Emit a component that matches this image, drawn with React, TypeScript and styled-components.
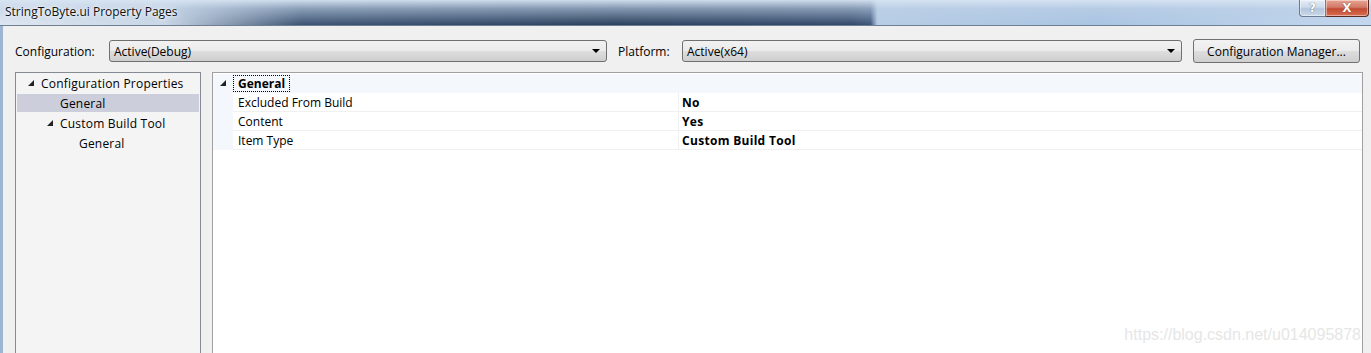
import React from 'react';
import styled, { createGlobalStyle } from 'styled-components';

type Property = {
  name: string;
  value: string;
}

type TreeNode = {
  label: string;
  depth: number;
  expanded?: boolean;
  selected?: boolean;
}

const properties: Array<Property> = [
  { name: 'Excluded From Build', value: 'No' },
  { name: 'Content', value: 'Yes' },
  { name: 'Item Type', value: 'Custom Build Tool' },
];

const treeNodes: Array<TreeNode> = [
  { label: 'Configuration Properties', depth: 0, expanded: true },
  { label: 'General', depth: 1, selected: true },
  { label: 'Custom Build Tool', depth: 1, expanded: true },
  { label: 'General', depth: 2 },
];

const GlobalStyle = createGlobalStyle`
  html, body {
    margin: 0;
    padding: 0;
    overflow: hidden;
  }
  body {
    font-family: "Open Sans", "Noto Sans", sans-serif;
    font-size: 12px;
    color: #000;
  }
`

const Window = styled.div`
  width: 1371px;
  height: 353px;
  display: flex;
  flex-direction: column;
  overflow: hidden;
  background: #a9c3df;
`

const TitleBar = styled.div`
  height: 25px;
  display: flex;
  align-items: flex-start;
  background:
    linear-gradient(180deg, rgba(215, 228, 242, 0.95) 0%, rgba(190, 208, 230, 0.6) 35%, rgba(40, 60, 90, 0) 100%),
    linear-gradient(90deg, #dfe7f0 0%, #c9d7e6 12%, #3c5372 22%, #2b405d 45%, #33496a 62%, #3d567a 63.5%, #b7cde5 64%, #a9c4e2 80%, #c3d8ee 100%);
  border-bottom: 1px solid #6e7f94;
`

const Title = styled.span`
  padding: 3px 0 0 5px;
  font-family: "Open Sans", "Noto Sans", sans-serif;
  font-size: 12px;
  color: #111;
  text-shadow: 0 0 6px #fff, 0 0 3px #fff;
`

const CaptionButtons = styled.div`
  margin-left: auto;
  margin-right: 2px;
  display: flex;
`

const CaptionButton = styled.div<{ $close?: boolean }>`
  width: ${p => (p.$close ? 43 : 27)}px;
  height: 17px;
  box-sizing: border-box;
  display: flex;
  align-items: center;
  justify-content: center;
  border: 1px solid ${p => (p.$close ? '#5a2a24' : '#6b7c90')};
  border-top: none;
  border-radius: ${p => (p.$close ? '0 0 4px 0' : '0 0 0 4px')};
  border-left: ${p => (p.$close ? 'none' : undefined)};
  background: ${p => p.$close
    ? 'linear-gradient(180deg, #e8a493 0%, #d27a68 45%, #c24a33 55%, #d86e52 100%)'
    : 'linear-gradient(180deg, #e6eef8 0%, #ccdaea 45%, #b3c6dc 55%, #c9d8ea 100%)'};
  box-shadow: inset 0 0 0 1px rgba(255, 255, 255, 0.45);
  color: #fff;
  font-family: "DejaVu Sans", sans-serif;
  font-weight: bold;
  font-size: 12px;
`

const Body = styled.div`
  flex: 1;
  display: flex;
  flex-direction: column;
  background: #f0f0f0;
  border-left: 3px solid #9db5d2;
  padding: 13px 8px 0 12px;
  min-height: 0;
`

const Toolbar = styled.div`
  display: flex;
  align-items: center;
  height: 24px;
`

const FieldLabel = styled.label<{ $width: number; $gap?: number }>`
  width: ${p => p.$width}px;
  margin-left: ${p => p.$gap ?? 0}px;
  font-size: 12px;
`

const Combo = styled.div<{ $width: number }>`
  width: ${p => p.$width}px;
  height: 22px;
  box-sizing: border-box;
  display: flex;
  align-items: center;
  padding: 0 4px;
  border: 1px solid #707070;
  border-radius: 3px;
  background: linear-gradient(180deg, #f2f2f2 0%, #ebebeb 48%, #dddddd 52%, #cfcfcf 100%);
`

const ComboText = styled.span`
  flex: 1;
`

const ComboArrow = styled.span`
  width: 0;
  height: 0;
  margin-right: 2px;
  border-left: 4px solid transparent;
  border-right: 4px solid transparent;
  border-top: 4px solid #000;
`

const Button = styled.button`
  margin-left: 11px;
  width: 167px;
  height: 24px;
  box-sizing: border-box;
  border: 1px solid #707070;
  border-radius: 3px;
  background: linear-gradient(180deg, #f2f2f2 0%, #ebebeb 48%, #dddddd 52%, #cfcfcf 100%);
  font-family: "Open Sans", "Noto Sans", sans-serif;
  font-size: 12px;
  color: #000;
  padding: 0;
`

const Panes = styled.div`
  flex: 1;
  display: flex;
  gap: 11px;
  margin-top: 9px;
  min-height: 0;
`

const TreePane = styled.div`
  width: 186px;
  box-sizing: border-box;
  background: #f4f4f4;
  border: 1px solid #868a93;
  border-bottom: none;
  padding: 0 1px;
  letter-spacing: 0.2px;
`

const TreeRow = styled.div<{ $depth: number; $selected?: boolean }>`
  height: 20px;
  display: flex;
  align-items: center;
  padding-left: ${p => 4 + p.$depth * 19}px;
  background: ${p => (p.$selected ? '#cccedb' : 'transparent')};
  box-shadow: ${p => (p.$selected ? 'inset 0 1px 0 #f4f4f4, inset 0 -1px 0 #f4f4f4' : 'none')};
`

const Expander = styled.span`
  width: 20px;
  flex: none;
  box-sizing: border-box;
  display: flex;
  align-items: center;
  padding-left: 7px;
`

const GridPane = styled.div`
  flex: 1;
  position: relative;
  background: #fff;
  border: 1px solid #a0a0a0;
  border-bottom: none;
  padding-top: 1px;
`

const GridRow = styled.div<{ $category?: boolean }>`
  height: 19px;
  display: flex;
  background: ${p => (p.$category ? '#f4f7fb' : '#fff')};
`

const Gutter = styled.div`
  width: 20px;
  flex: none;
  display: flex;
  align-items: center;
  justify-content: center;
  background: #f4f7fb;
`

const CategoryName = styled.span`
  margin-top: 1px;
  height: 17px;
  box-sizing: border-box;
  padding: 0 4px;
  display: flex;
  align-items: center;
  font-weight: bold;
  border: 1px dotted #000;
`

const Cell = styled.div<{ $width?: number; $bold?: boolean }>`
  ${p => (p.$width ? `width: ${p.$width}px; flex: none;` : 'flex: 1;')}
  box-sizing: border-box;
  display: flex;
  align-items: center;
  padding-left: ${p => (p.$bold ? 3 : 5)}px;
  font-weight: ${p => (p.$bold ? 'bold' : 'normal')};
  letter-spacing: ${p => (p.$bold ? '0.3px' : '0')};
  border-bottom: 1px solid #f0f0f0;
  ${p => (p.$width ? 'border-right: 1px solid #f0f0f0;' : '')}
`

const Watermark = styled.span`
  position: absolute;
  right: 1px;
  bottom: 9px;
  font-family: "Liberation Sans", Arial, sans-serif;
  font-size: 16px;
  color: #e6e6e6;
`

const Triangle = () => (
  <svg width="7" height="7" viewBox="0 0 7 7">
    <polygon points="6,0 6,6 0,6" fill="#222" />
  </svg>
)

const App = () => {
  return (
    <Window>
      <GlobalStyle />
      <TitleBar>
        <Title>StringToByte.ui Property Pages</Title>
        <CaptionButtons>
          <CaptionButton><span style={{ color: '#fff', textShadow: '0 0 1px #333' }}>?</span></CaptionButton>
          <CaptionButton $close><span style={{ textShadow: '0 0 1px #4a1a10' }}>X</span></CaptionButton>
        </CaptionButtons>
      </TitleBar>
      <Body>
        <Toolbar>
          <FieldLabel $width={94}>Configuration:</FieldLabel>
          <Combo $width={498}>
            <ComboText>Active(Debug)</ComboText>
            <ComboArrow />
          </Combo>
          <FieldLabel $width={64} $gap={11}>Platform:</FieldLabel>
          <Combo $width={500}>
            <ComboText>Active(x64)</ComboText>
            <ComboArrow />
          </Combo>
          <Button>Configuration Manager...</Button>
        </Toolbar>
        <Panes>
          <TreePane>
            {treeNodes.map((node, i) => (
              <TreeRow key={i} $depth={node.depth} $selected={node.selected}>
                <Expander>{node.expanded && <Triangle />}</Expander>
                <span>{node.label}</span>
              </TreeRow>
            ))}
          </TreePane>
          <GridPane>
            <GridRow $category>
              <Gutter><Triangle /></Gutter>
              <CategoryName>General</CategoryName>
            </GridRow>
            {properties.map(prop => (
              <GridRow key={prop.name}>
                <Gutter />
                <Cell $width={446}>{prop.name}</Cell>
                <Cell $bold>{prop.value}</Cell>
              </GridRow>
            ))}
            <Watermark>https://blog.csdn.net/u014095878</Watermark>
          </GridPane>
        </Panes>
      </Body>
    </Window>
  );
}

export default App;
